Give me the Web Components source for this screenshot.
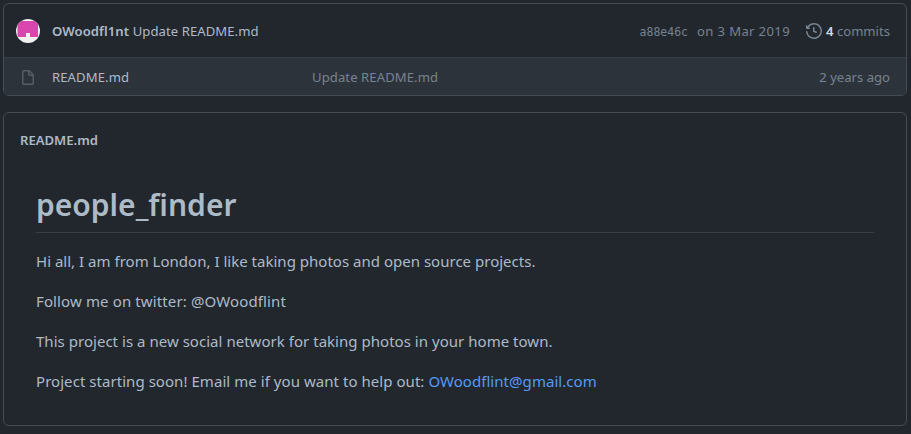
<!DOCTYPE html>
<html lang="en">
<head>
<meta charset="utf-8">
<title>people_finder</title>
<style>
  html, body { margin: 0; height: 100%; background: #22272e; }
  body { font-family: "Noto Sans", "Open Sans", sans-serif; color: #adbac7; overflow: hidden; }
</style>
</head>
<body>
<repo-page>
  <file-list>
    <commit-bar slot="header" author="OWoodfl1nt" message="Update README.md" sha="a88e46c" date="on 3 Mar 2019" count="4"></commit-bar>
    <file-row name="README.md" message="Update README.md" age="2 years ago"></file-row>
  </file-list>
  <readme-box file="README.md">
    <doc-title>people_finder</doc-title>
    <doc-par style="--ls:.014px">Hi all, I am from London, I like taking photos and open source projects.</doc-par>
    <doc-par style="--ls:.125px">Follow me on twitter: @OWoodflint</doc-par>
    <doc-par style="--ls:.03px">This project is a new social network for taking photos in your home town.</doc-par>
    <doc-par style="--ls:.05px">Project starting soon! Email me if you want to help out: <mail-link address="OWoodflint@gmail.com"></mail-link></doc-par>
  </readme-box>
</repo-page>
<script>
  const define = (name, html) => customElements.define(name, class extends HTMLElement {
    constructor() {
      super();
      const root = this.attachShadow({ mode: 'open' });
      root.innerHTML = html;
    }
    connectedCallback() {
      for (const el of this.shadowRoot.querySelectorAll('[data-attr]'))
        el.textContent = this.getAttribute(el.dataset.attr);
    }
  });

  define('repo-page', `
    <style>:host { display: flex; flex-direction: column; gap: 16px; padding: 3px 4px 8px 3px; box-sizing: border-box; }</style>
    <slot></slot>`);

  define('file-list', `
    <style>:host { display: block; height: 93px; box-sizing: border-box; border: 1px solid #444c56; border-radius: 6px; overflow: hidden; }</style>
    <slot name="header"></slot><slot></slot>`);

  define('commit-bar', `
    <style>
      :host { display: flex; align-items: center; height: 53px; padding: 0 16px 0 12px; box-sizing: content-box; font-size: 13.1px; line-height: 20px; white-space: nowrap; }
      .msg { margin-left: 12px; letter-spacing: .07px; }
      b { font-weight: 600; }
      .meta { margin-left: auto; display: flex; align-items: center; color: #768390; }
      .sha { font: 11.5px/20px "DejaVu Sans Mono", monospace; margin: 2px 9px 0 0; }
      .date { letter-spacing: .36px; }
      history-icon { margin: 1px 4px 0 16px; }
      .n { color: #cdd9e5; }
    </style>
    <user-avatar></user-avatar>
    <span class="msg"><b data-attr="author"></b> <span data-attr="message"></span></span>
    <span class="meta"><span class="sha" data-attr="sha"></span><span class="date" data-attr="date"></span><history-icon></history-icon><span><b class="n" data-attr="count"></b> commits</span></span>`);

  define('user-avatar', `
    <style>:host { display: block; width: 24px; height: 24px; } svg { display: block; border-radius: 50%; }</style>
    <svg width="24" height="24" viewBox="0 0 24 24"><rect width="24" height="24" fill="#f0f0f0"/><path d="M1.5 2h20.500v16h-8v-4h-4v4h-8.500z" fill="#d946ad"/></svg>`);

  define('history-icon', `
    <style>:host { display: block; width: 16px; height: 16px; } svg { display: block; fill: #768390; }</style>
    <svg width="16" height="16" viewBox="0 0 16 16"><path fill-rule="evenodd" d="M1.643 3.143L.427 1.927A.25.25 0 000 2.104V5.75c0 .138.112.25.25.25h3.646a.25.25 0 00.177-.427L2.715 4.215a6.5 6.5 0 11-1.18 4.458.75.75 0 10-1.493.154 8.001 8.001 0 101.6-5.684zM7.75 4a.75.75 0 01.75.75v2.992l2.028.812a.75.75 0 01-.557 1.392l-2.5-1A.75.75 0 017 8.25v-3.5A.75.75 0 017.75 4z"/></svg>`);

  define('file-icon', `
    <style>:host { display: block; width: 16px; height: 16px; } svg { display: block; fill: #545d68; }</style>
    <svg width="16" height="16" viewBox="0 0 16 16"><path fill-rule="evenodd" d="M3.75 1.5a.25.25 0 00-.25.25v11.5c0 .138.112.25.25.25h8.5a.25.25 0 00.25-.25V6H9.75A1.75 1.75 0 018 4.25V1.5H3.75zm5.75.56v2.19c0 .138.112.25.25.25h2.19L9.5 2.06zM2 1.75C2 .784 2.784 0 3.75 0h5.086c.464 0 .909.184 1.237.513l3.414 3.414c.329.328.513.773.513 1.237v8.086A1.75 1.75 0 0112.25 15h-8.5A1.75 1.75 0 012 13.25V1.75z"/></svg>`);

  define('file-row', `
    <style>
      :host { display: grid; grid-template-columns: 16px 276px 1fr auto; align-items: center; height: 37px; padding: 0 16px; border-top: 1px solid #373e47; background: #2d333b; font-size: 13.1px; line-height: 20px; white-space: nowrap; }
      .name { padding-left: 16px; letter-spacing: .1px; }
      .message { letter-spacing: .08px; }
      .dim { color: #768390; }
      file-icon { margin-top: 2px; }
    </style>
    <file-icon></file-icon>
    <span class="name" data-attr="name"></span>
    <span class="dim message" data-attr="message"></span>
    <span class="dim" data-attr="age"></span>`);

  define('readme-box', `
    <style>
      :host { display: block; height: 314px; box-sizing: border-box; border: 1px solid #444c56; border-radius: 6px; }
      header { padding: 17px 16px 0; font-size: 13.1px; line-height: 20px; font-weight: 600; }
      article { padding: 32px 32px 0; }
    </style>
    <header data-attr="file"></header>
    <article><slot></slot></article>`);

  define('doc-title', `
    <style>:host { display: block; height: 51px; box-sizing: border-box; margin-bottom: 16px; border-bottom: 1px solid #373e47; font-size: 30px; line-height: 46px; font-weight: 600; }</style>
    <slot></slot>`);

  define('doc-par', `
    <style>:host { display: block; margin-bottom: 16px; font-size: 15px; line-height: 24px; letter-spacing: var(--ls); font-variant-ligatures: none; white-space: nowrap; }</style>
    <slot></slot>`);

  define('mail-link', `
    <style>:host { display: inline; } a { color: #539bf5; text-decoration: none; }</style>
    <a href="#" data-attr="address"></a>`);
</script>
</body>
</html>
